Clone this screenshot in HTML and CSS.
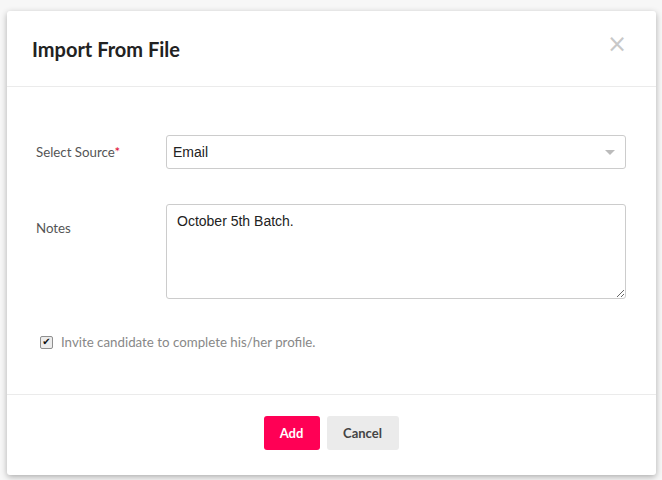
FILE: index.html
```html
<!DOCTYPE html>
<html lang="en">
<head>
    <meta charset="UTF-8">
    <meta name="viewport" content="width=device-width, initial-scale=1.0">
    <title>Import From File</title>
    <link rel="stylesheet" href="styles.css">
</head>
<body>

    <div class="modal">
        <div class="modal-header">
            <h2>Import From File</h2>
            <span class="close-btn">&times;</span>
        </div>

        <div class="modal-body">
            <div class="form-row">
                <label class="form-label">Select Source<span class="required">*</span></label>
                <div class="select-box">
                    <span>Email</span>
                    <span class="caret"></span>
                </div>
            </div>

            <div class="form-row notes-row">
                <label class="form-label">Notes</label>
                <textarea class="notes-input">October 5th Batch.</textarea>
            </div>

            <!-- Custom checkbox so it matches the old-style grey box -->
            <label class="check-row">
                <span class="check-box">&#10004;</span>
                <span>Invite candidate to complete his/her profile.</span>
            </label>
        </div>

        <div class="modal-footer">
            <button class="btn btn-add">Add</button>
            <button class="btn btn-cancel">Cancel</button>
        </div>
    </div>

</body>
</html>
```

FILE: styles.css
```css
body {
    font-family: 'Lato', sans-serif;
    background-color: #f7f7f7;
    margin: 0;
    padding: 0;
    height: 480px;
    overflow: hidden;
}

.modal {
    margin: 11px 6px 0 7px;
    height: 464px;
    background-color: #fff;
    border-radius: 3px;
    box-shadow: 0px 2px 6px rgba(0, 0, 0, 0.3);
    display: flex;
    flex-direction: column;
}

.modal-header {
    height: 75px;
    border-bottom: 1px solid #ebebeb;
    display: flex;
    align-items: center;
    justify-content: space-between;
    padding: 0 29px 0 25px;
}

h2 {
    margin: 0;
    font-size: 20px;
    font-weight: 700;
    color: #222;
}

.close-btn {
    color: #c8c8c8;
    font-family: 'DejaVu Sans', sans-serif;
    font-size: 24px;
    line-height: 1;
    margin-bottom: 10px;
}

.modal-body {
    height: 308px;
    border-bottom: 1px solid #ebebeb;
    padding: 48px 30px 0 29px;
    box-sizing: border-box;
}

.form-row {
    display: flex;
    align-items: center;
}

.form-label {
    width: 130px;
    font-size: 13.3px;
    color: #555;
}

.required {
    color: #e0002a;
}

.select-box {
    flex: 1;
    height: 34px;
    box-sizing: border-box;
    border: 1px solid #ccc;
    border-radius: 3px;
    display: flex;
    align-items: center;
    justify-content: space-between;
    padding: 0 10px 0 6px;
    font-family: 'Liberation Sans', Arial, sans-serif;
    font-size: 14px;
    color: #222;
}

.caret {
    width: 0;
    height: 0;
    border-left: 5px solid transparent;
    border-right: 5px solid transparent;
    border-top: 5px solid #bbb;
}

.notes-row {
    margin-top: 35px;
    align-items: flex-start;
}

.notes-row .form-label {
    margin-top: 16px;
}

.notes-input {
    flex: 1;
    height: 95px;
    box-sizing: border-box;
    border: 1px solid #ccc;
    border-radius: 3px;
    padding: 8px 10px;
    font-family: 'Liberation Sans', Arial, sans-serif;
    font-size: 14px;
    color: #222;
    resize: vertical;
    margin: 0;
}

.check-row {
    display: flex;
    align-items: center;
    margin-top: 35px;
    margin-left: 4px;
    font-size: 13.3px;
    color: #888;
}

.check-box {
    width: 13px;
    height: 13px;
    box-sizing: border-box;
    border: 1px solid #8f8f8f;
    border-radius: 2px;
    background-color: #ececec;
    margin-right: 8px;
    display: flex;
    align-items: center;
    justify-content: center;
    font-family: 'DejaVu Sans', sans-serif;
    font-size: 10px;
    line-height: 1;
    color: #111;
}

.modal-footer {
    flex: 1;
    display: flex;
    justify-content: center;
    align-items: flex-start;
    gap: 7px;
    padding-top: 21px;
    padding-right: 1px;
}

.btn {
    height: 34px;
    border: none;
    border-radius: 3px;
    font-family: 'Lato', sans-serif;
    font-size: 13px;
    font-weight: 700;
    cursor: pointer;
}

.btn-add {
    width: 56px;
    background-color: #ff0055;
    color: white;
}

.btn-cancel {
    width: 72px;
    background-color: #ebebeb;
    color: #444;
}
```
